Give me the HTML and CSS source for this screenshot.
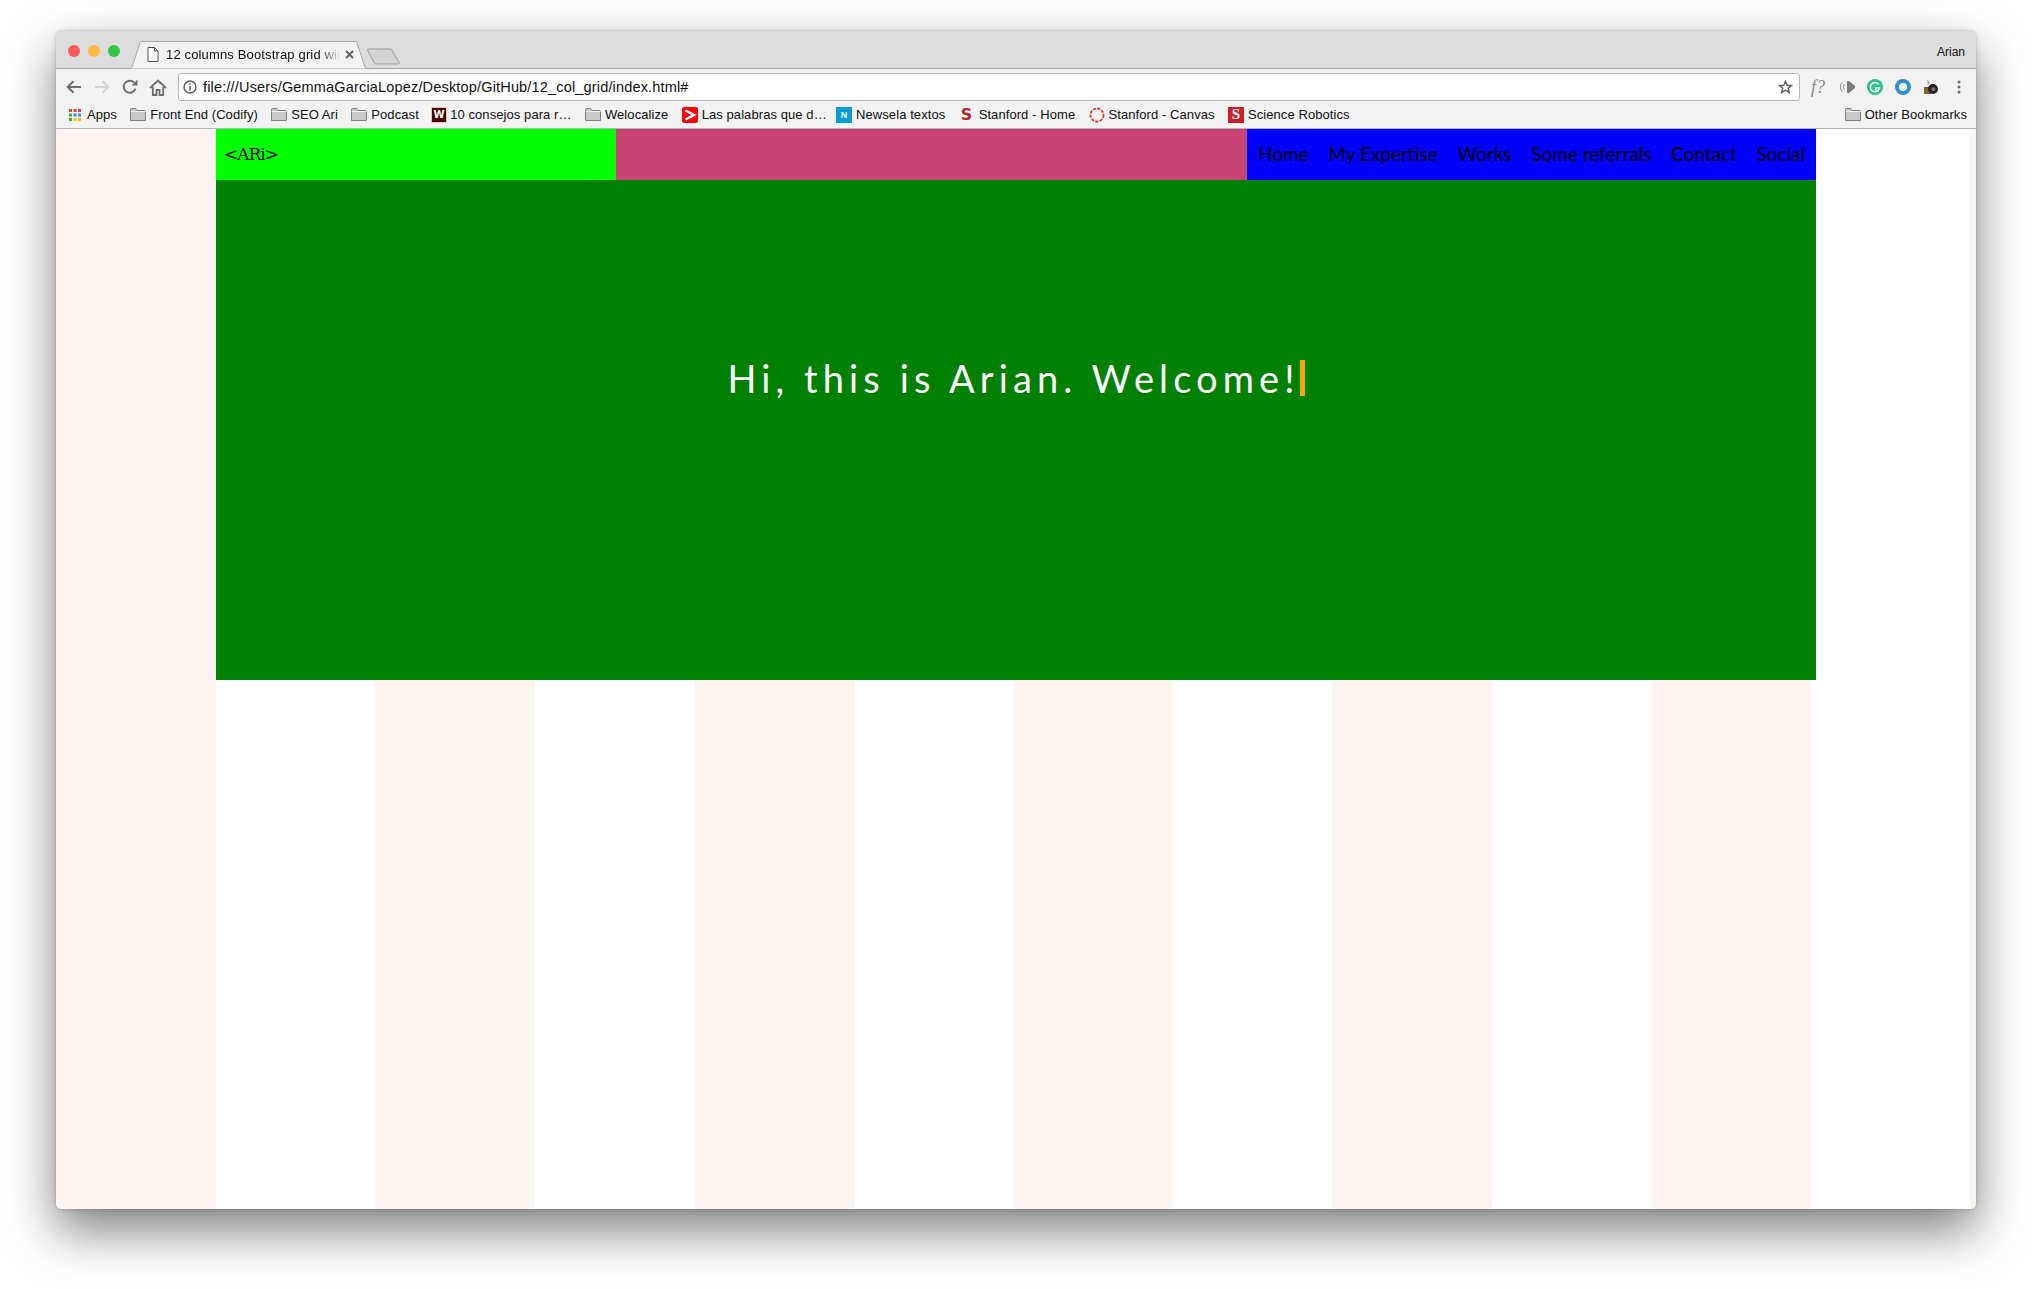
FILE: index.html
```html
<!DOCTYPE html>
<html lang="en">
<head>
<meta charset="utf-8">
<title>12 columns Bootstrap grid</title>
<link rel="stylesheet" href="styles.css">
</head>
<body>
<div class="window">
  <div class="tabstrip">
    <div class="lights"><span class="light red"></span><span class="light yellow"></span><span class="light green"></span></div>
    <div class="tab">
      <svg class="tab-shape" width="246" height="28" viewBox="0 0 246 28"><path d="M0 27.500h2c1 0 1.500-.5 2-1.500L12 2c.4-1 1-1.500 2-1.500h213c1 0 1.600.5 2 1.500l8 24c.4 1 1 1.500 2 1.500h7" fill="#f2f2f2" stroke="#a9a9a9"/></svg>
      <svg class="tab-page" width="12" height="15" viewBox="0 0 12 15"><path d="M1 .5h6.500L11 4v10.500H1z M7.500.5V4H11" fill="#fff" stroke="#555"/></svg>
      <span class="tab-title">12 columns Bootstrap grid wit</span>
      <svg class="tab-close" width="9" height="9" viewBox="0 0 9 9"><path d="M1 1l7 7M8 1l-7 7" stroke="#5f5f5f" stroke-width="1.800"/></svg>
    </div>
    <svg class="newtab" width="34" height="17" viewBox="0 0 34 17"><path d="M1 1h22c1 0 1.500.5 2 1.500l7 12c.4 1 0 1.500-1 1.500H9c-1 0-1.500-.5-2-1.500L.5 2C.2 1.500.3 1 1 1z" fill="#d3d3d3" stroke="#9c9c9c"/></svg>
    <span class="profile">Arian</span>
  </div>
  <div class="toolbar">
    <svg class="tool" width="16" height="14" viewBox="0 0 16 14"><path d="M15 7H2M7.500 1.200L1.700 7l5.800 5.800" fill="none" stroke="#6e6e6e" stroke-width="2"/></svg>
    <svg class="tool" width="16" height="14" viewBox="0 0 16 14"><path d="M1 7h13M8.500 1.200L14.300 7l-5.800 5.800" fill="none" stroke="#d4d4d4" stroke-width="2"/></svg>
    <svg class="tool" width="16" height="16" viewBox="0 0 16 16"><path d="M13.500 9.500A6 6 0 1 1 12 3.500" fill="none" stroke="#6e6e6e" stroke-width="2"/><path d="M9.500 6.500h6v-6z" fill="#6e6e6e"/></svg>
    <svg class="tool" width="18" height="17" viewBox="0 0 18 17"><path d="M1 9L9 1.500 17 9M3.800 8v8h3.700v-5h3v5h3.700V8" fill="none" stroke="#6e6e6e" stroke-width="1.800"/></svg>
    <div class="omnibox">
      <svg width="14" height="14" viewBox="0 0 14 14"><circle cx="7" cy="7" r="6" fill="none" stroke="#5a5a5a" stroke-width="1.400"/><path d="M7 6v4.500M7 3.200v1.600" stroke="#5a5a5a" stroke-width="1.500"/></svg>
      <span class="url">file:///Users/GemmaGarciaLopez/Desktop/GitHub/12_col_grid/index.html#</span>
      <svg class="star" width="15" height="15" viewBox="0 0 15 15"><path d="M7.500 1.500l1.800 4h4.300l-3.400 2.800 1.200 4.400-3.900-2.500-3.900 2.500 1.200-4.400L1.400 5.500h4.300z" fill="none" stroke="#616161" stroke-width="1.400"/></svg>
    </div>
    <div class="extensions">
      <span class="ext-f">f?</span>
      <svg width="16" height="14" viewBox="0 0 16 14"><path d="M8 1h2l6 5v2l-6 5H8z" fill="#7b7b7b"/><path d="M5.500 4a4.500 4.500 0 0 0 0 6M3 2.500a7.500 7.500 0 0 0 0 9" fill="none" stroke="#8a8a8a"/></svg>
      <svg width="16" height="16" viewBox="0 0 16 16"><circle cx="8" cy="8" r="8" fill="#2fc28a"/><path d="M11.500 5.200A4.600 4.600 0 1 0 12.500 9H8.800v2.500" fill="none" stroke="#fff" stroke-width="1.500"/></svg>
      <svg width="16" height="16" viewBox="0 0 16 16"><circle cx="8" cy="8" r="6" fill="#fff" stroke="#2b8fd0" stroke-width="4"/></svg>
      <svg width="16" height="16" viewBox="0 0 16 16"><path d="M4 0l3 4-2 2z" fill="#aaa"/><rect x="1" y="8" width="7" height="7" fill="#8a5a2b"/><circle cx="10" cy="10" r="5" fill="#222"/><circle cx="10.500" cy="10" r="2" fill="#777"/></svg>
      <svg class="dots" width="4" height="14" viewBox="0 0 4 14"><circle cx="2" cy="2" r="1.500" fill="#6a6a6a"/><circle cx="2" cy="7" r="1.500" fill="#6a6a6a"/><circle cx="2" cy="12" r="1.500" fill="#6a6a6a"/></svg>
    </div>
  </div>
  <div class="bookmarks">
    <span class="bm bm-apps"><svg width="14" height="14" viewBox="0 0 14 14"><rect x="1" y="1" width="3" height="3" fill="#e8453c"/><rect x="5.500" y="1" width="3" height="3" fill="#e8453c"/><rect x="10" y="1" width="3" height="3" fill="#e8453c"/><rect x="1" y="5.500" width="3" height="3" fill="#34a853"/><rect x="5.500" y="5.500" width="3" height="3" fill="#4285f4"/><rect x="10" y="5.500" width="3" height="3" fill="#4285f4"/><rect x="1" y="10" width="3" height="3" fill="#34a853"/><rect x="5.500" y="10" width="3" height="3" fill="#fbbc05"/><rect x="10" y="10" width="3" height="3" fill="#fbbc05"/></svg>Apps</span>
    <span class="bm"><svg class="folder" width="16" height="13" viewBox="0 0 16 13"><use href="#folder"/></svg>Front End (Codify)</span>
    <span class="bm"><svg class="folder" width="16" height="13" viewBox="0 0 16 13"><use href="#folder"/></svg>SEO Ari</span>
    <span class="bm"><svg class="folder" width="16" height="13" viewBox="0 0 16 13"><use href="#folder"/></svg>Podcast</span>
    <span class="bm"><span class="fav fav-w">W</span>10 consejos para r…</span>
    <span class="bm"><svg class="folder" width="16" height="13" viewBox="0 0 16 13"><use href="#folder"/></svg>Welocalize</span>
    <span class="bm bm-tight"><span class="fav fav-s"><svg width="16" height="16" viewBox="0 0 16 16"><path d="M3.500 3.500L12 8l-8.500 4.500" fill="none" stroke="#fff" stroke-width="2.500"/></svg></span>Las palabras que d…</span>
    <span class="bm"><span class="fav fav-n">N</span>Newsela textos</span>
    <span class="bm"><span class="fav fav-stan">S</span>Stanford - Home</span>
    <span class="bm"><svg width="16" height="16" viewBox="0 0 16 16"><circle cx="8" cy="8" r="6.500" fill="none" stroke="#e5392d" stroke-width="1.800" stroke-dasharray="3 1.300"/></svg>Stanford - Canvas</span>
    <span class="bm"><span class="fav fav-sr">S</span>Science Robotics</span>
    <span class="bm bm-other"><svg class="folder" width="16" height="13" viewBox="0 0 16 13"><use href="#folder"/></svg>Other Bookmarks</span>
  </div>
  <svg class="defs" width="0" height="0"><defs><g id="folder"><path d="M.5 12.500V1.500c0-.6.400-1 1-1h4l1.500 2h7.500c.6 0 1 .4 1 1v9z" fill="#c9c9c9" stroke="#7d7d7d"/><path d="M.5 3.500h15" stroke="#f2f2f2"/></g></defs></svg>
  <main class="page">
    <div class="container">
      <header class="site-header">
        <div class="brand">&lt;ARi&gt;</div>
        <div class="spacer"></div>
        <nav class="nav">
          <a>Home</a><a>My Expertise</a><a>Works</a><a>Some referrals</a><a>Contact</a><a>Social</a>
        </nav>
      </header>
      <section class="hero"><h1 class="greeting">Hi, this is Arian. Welcome!</h1></section>
    </div>
  </main>
</div>
</body>
</html>
```
FILE: styles.css
```css
* { box-sizing: border-box; }
html, body { margin: 0; height: 100%; background: #fff; overflow: hidden; }
body { padding: 31px 56px 0; font-family: "Liberation Sans", Arial, sans-serif; }
.window {
  width: 1920px; height: 1178px; display: flex; flex-direction: column;
  border-radius: 6px 6px 5px 5px; overflow: hidden; position: relative;
}
body::before {
  content: ""; position: absolute; left: 56px; top: 31px; width: 1920px; height: 1178px;
  border-radius: 6px; box-shadow: 0 0 1px rgba(0,0,0,.5), 0 0 6px rgba(0,0,0,.12), 0 22px 50px 0 rgba(0,0,0,.5);
}
.tabstrip {
  height: 38px; flex: none; background: #dcdcdc; display: flex; align-items: flex-end;
  border-bottom: 1px solid #a9a9a9; padding-left: 12px; position: relative;
}
.lights { display: flex; gap: 8px; align-self: flex-start; margin-top: 14px; }
.light { width: 12px; height: 12px; border-radius: 50%; }
.red { background: #fc5b57; } .yellow { background: #fdbc40; } .green { background: #33c748; }
.tab {
  position: absolute; left: 72px; top: 10px; width: 246px; height: 28px;
  display: flex; align-items: center; padding: 0 0 2px 19px;
}
.tab-shape { position: absolute; left: 0; top: 0; }
.tab-page, .tab-title, .tab-close { position: relative; }
.tab-title {
  width: 174px; flex: none; margin-left: 7px; font-size: 13px; letter-spacing: .15px; white-space: nowrap; color: #111;
  -webkit-mask-image: linear-gradient(90deg, #000 88%, transparent);
  mask-image: linear-gradient(90deg, #000 88%, transparent);
}
.tab-close { margin-left: 5px; }
.newtab { position: absolute; left: 311px; top: 17px; }
.profile { position: absolute; right: 11px; top: 14px; font-size: 12px; color: #111; }
.toolbar {
  height: 36px; flex: none; background: #f2f2f2; display: flex; align-items: center; padding: 0 0 0 10px;
}
.tool { flex: none; margin-right: 12px; }
.tool:nth-child(3) { margin-right: 11px; }
.tool:nth-child(4) { margin-right: 11px; }
.omnibox {
  width: 1622px; height: 28px; background: #fff; border: 1px solid #b5b5b5; border-radius: 3px;
  display: flex; align-items: center; padding: 0 6px 0 4px; font-size: 14.500px; letter-spacing: .17px; color: #111;
}
.url { margin-left: 6px; flex: 1; }
.extensions { display: flex; align-items: center; gap: 12px; margin-left: 11px; }
.ext-f { width: 16px; font-family: "Liberation Serif", serif; font-style: italic; font-size: 18px; color: #8a8a8a; white-space: nowrap; }
.dots { margin-left: 6px; }
.bookmarks {
  height: 24px; flex: none; background: #f2f2f2; border-bottom: 1px solid #b4b4b4;
  display: flex; align-items: center; padding: 0 9px 4px 12px; gap: 13.300px; font-size: 13px; letter-spacing: .08px; color: #111;
}
.bm { display: flex; align-items: center; gap: 4px; white-space: nowrap; }
.bm-apps { gap: 5px; }
.bm-tight { margin-right: -4px; }
.bm-other { margin-left: auto; }
.fav { width: 16px; height: 16px; display: flex; align-items: center; justify-content: center; font-weight: 700; font-size: 11px; color: #fff; flex: none; }
.fav-w { background: #4b0000; font-size: 10px; width: 14px; height: 14px; outline: 1px solid #d9cfae; font-family: "DejaVu Sans", sans-serif; }
.fav-s { background: #f50a0a; border-radius: 2px; }
.fav-n { background: #0a9ad6; font-size: 9px; }
.fav-stan { color: #b1262e; background: transparent; font-size: 16px; font-family: "DejaVu Sans", sans-serif; }
.fav-sr { background: #cf1f26; font-size: 15px; font-family: "Liberation Serif", serif; }
.defs { position: absolute; }
.page {
  flex: 1; min-height: 0;
  background: repeating-linear-gradient(90deg, #fff4f2 0, #fff4f2 160px, #fff 160px, #fff 319px);
  padding-left: 160px;
}
.container { width: 1600px; }
.site-header { display: flex; height: 51px; }
.brand {
  width: 400px; background: #0f0; display: flex; align-items: center; padding: 0 0 2px 8px;
  font-family: "DejaVu Serif", serif; font-size: 17px; letter-spacing: -1px; color: #000;
}
.spacer { width: 631px; background: #c74474; }
.nav { flex: 1; background: #00f; display: flex; align-items: center; justify-content: space-between; padding: 0 11px 2px 11px; }
.nav a { font-family: Lato, sans-serif; font-size: 19px; color: #000; }
.hero { height: 500px; background: #008000; display: flex; justify-content: center; padding: 180px 0 0 0; }
.greeting {
  margin: 0; height: 36px; font-family: Lato, sans-serif; font-weight: 400; font-size: 38px; line-height: 36px;
  letter-spacing: 5.100px; color: #fff; border-right: 5px solid #ffa500; white-space: nowrap;
}
```
